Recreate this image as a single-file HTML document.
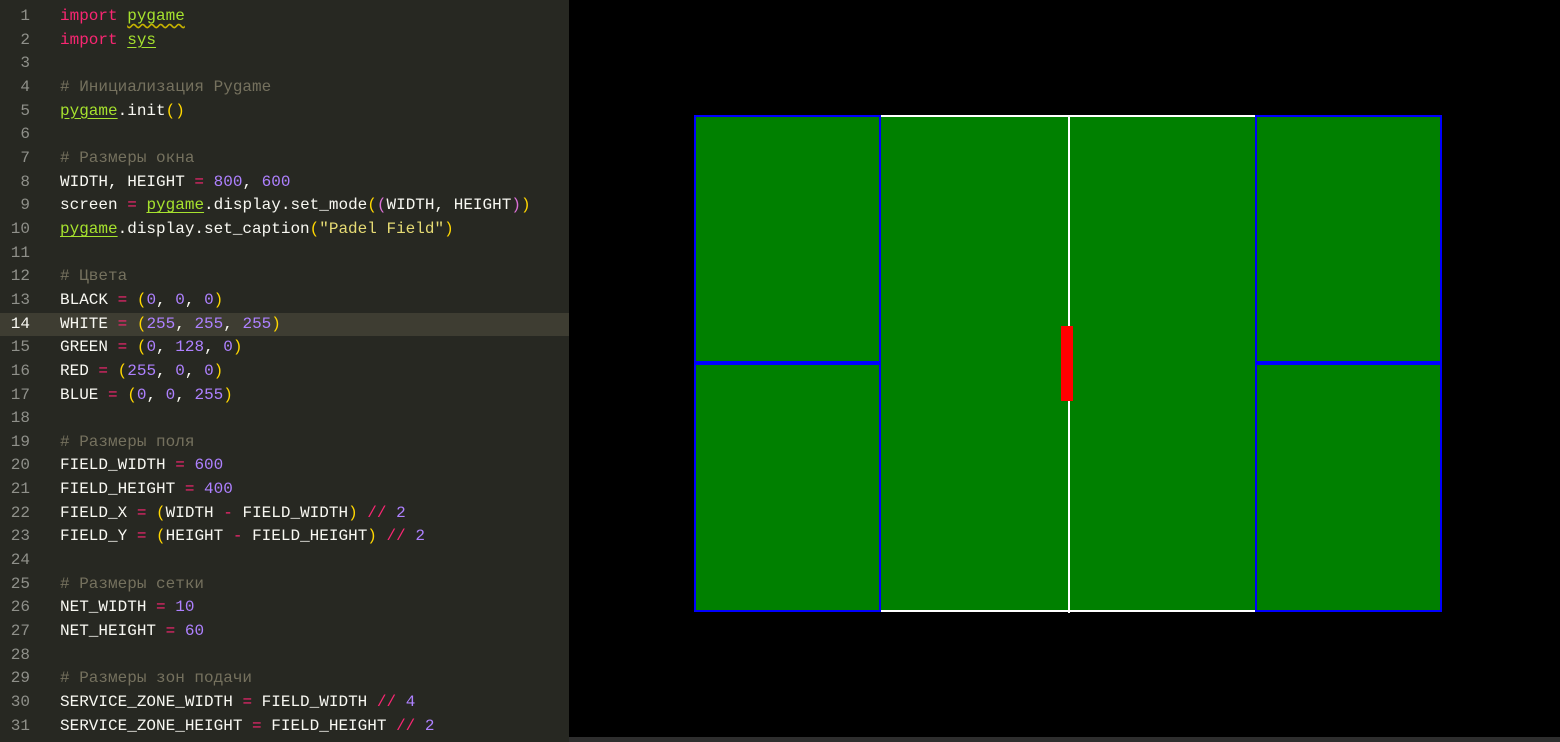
<!DOCTYPE html>
<html><head><meta charset="utf-8"><style>
body{margin:0;width:1560px;height:742px;background:#272822;overflow:hidden;position:relative;font-family:"Liberation Mono",monospace;font-size:16px}
.ed{position:absolute;left:0;top:5px;width:569px}
.l{height:23.67px;line-height:23.67px;white-space:pre;color:#f8f8f2;position:relative}
.n{position:absolute;left:0;width:30px;text-align:right;color:#8f908a}
.c{position:absolute;left:60px}
.hl{background:#3e3d32}
.k{color:#f92672}.g{color:#a6e22e;text-decoration:underline;text-decoration-color:#a6e22e;text-underline-offset:3px}.cm{color:#75715e}.p{color:#ae81ff}.s{color:#e6db74}.y{color:#ffd700}.m{color:#da70d6}
.w{text-decoration:underline wavy #c8b400}
.game{position:absolute;left:569px;top:0;width:991px;height:737px;background:#000}
.bot{position:absolute;left:569px;top:737px;width:991px;height:5px;background:#2e2e2e}
</style></head><body>
<div class="ed">
<div class="l"><span class="n">1</span><span class="c"><span class="k">import</span> <span class="g w">pygame</span></span></div>
<div class="l"><span class="n">2</span><span class="c"><span class="k">import</span> <span class="g">sys</span></span></div>
<div class="l"><span class="n">3</span></div>
<div class="l"><span class="n">4</span><span class="c cm"># Инициализация Pygame</span></div>
<div class="l"><span class="n">5</span><span class="c"><span class="g">pygame</span>.init<span class="y">()</span></span></div>
<div class="l"><span class="n">6</span></div>
<div class="l"><span class="n">7</span><span class="c cm"># Размеры окна</span></div>
<div class="l"><span class="n">8</span><span class="c">WIDTH, HEIGHT <span class="k">=</span> <span class="p">800</span>, <span class="p">600</span></span></div>
<div class="l"><span class="n">9</span><span class="c">screen <span class="k">=</span> <span class="g">pygame</span>.display.set_mode<span class="y">(</span><span class="m">(</span>WIDTH, HEIGHT<span class="m">)</span><span class="y">)</span></span></div>
<div class="l"><span class="n">10</span><span class="c"><span class="g">pygame</span>.display.set_caption<span class="y">(</span><span class="s">"Padel Field"</span><span class="y">)</span></span></div>
<div class="l"><span class="n">11</span></div>
<div class="l"><span class="n">12</span><span class="c cm"># Цвета</span></div>
<div class="l"><span class="n">13</span><span class="c">BLACK <span class="k">=</span> <span class="y">(</span><span class="p">0</span>, <span class="p">0</span>, <span class="p">0</span><span class="y">)</span></span></div>
<div class="l hl"><span class="n" style="color:#f8f8f2">14</span><span class="c">WHITE <span class="k">=</span> <span class="y">(</span><span class="p">255</span>, <span class="p">255</span>, <span class="p">255</span><span class="y">)</span></span></div>
<div class="l"><span class="n">15</span><span class="c">GREEN <span class="k">=</span> <span class="y">(</span><span class="p">0</span>, <span class="p">128</span>, <span class="p">0</span><span class="y">)</span></span></div>
<div class="l"><span class="n">16</span><span class="c">RED <span class="k">=</span> <span class="y">(</span><span class="p">255</span>, <span class="p">0</span>, <span class="p">0</span><span class="y">)</span></span></div>
<div class="l"><span class="n">17</span><span class="c">BLUE <span class="k">=</span> <span class="y">(</span><span class="p">0</span>, <span class="p">0</span>, <span class="p">255</span><span class="y">)</span></span></div>
<div class="l"><span class="n">18</span></div>
<div class="l"><span class="n">19</span><span class="c cm"># Размеры поля</span></div>
<div class="l"><span class="n">20</span><span class="c">FIELD_WIDTH <span class="k">=</span> <span class="p">600</span></span></div>
<div class="l"><span class="n">21</span><span class="c">FIELD_HEIGHT <span class="k">=</span> <span class="p">400</span></span></div>
<div class="l"><span class="n">22</span><span class="c">FIELD_X <span class="k">=</span> <span class="y">(</span>WIDTH <span class="k">-</span> FIELD_WIDTH<span class="y">)</span> <span class="k">//</span> <span class="p">2</span></span></div>
<div class="l"><span class="n">23</span><span class="c">FIELD_Y <span class="k">=</span> <span class="y">(</span>HEIGHT <span class="k">-</span> FIELD_HEIGHT<span class="y">)</span> <span class="k">//</span> <span class="p">2</span></span></div>
<div class="l"><span class="n">24</span></div>
<div class="l"><span class="n">25</span><span class="c cm"># Размеры сетки</span></div>
<div class="l"><span class="n">26</span><span class="c">NET_WIDTH <span class="k">=</span> <span class="p">10</span></span></div>
<div class="l"><span class="n">27</span><span class="c">NET_HEIGHT <span class="k">=</span> <span class="p">60</span></span></div>
<div class="l"><span class="n">28</span></div>
<div class="l"><span class="n">29</span><span class="c cm"># Размеры зон подачи</span></div>
<div class="l"><span class="n">30</span><span class="c">SERVICE_ZONE_WIDTH <span class="k">=</span> FIELD_WIDTH <span class="k">//</span> <span class="p">4</span></span></div>
<div class="l"><span class="n">31</span><span class="c">SERVICE_ZONE_HEIGHT <span class="k">=</span> FIELD_HEIGHT <span class="k">//</span> <span class="p">2</span></span></div>
</div>
<div class="game">
<svg width="991" height="737" style="position:absolute;left:0;top:0">
<rect x="125" y="115" width="747" height="497" fill="#008000"/>
<line x1="125" y1="116" x2="872" y2="116" stroke="#fff" stroke-width="2"/>
<line x1="125" y1="611" x2="872" y2="611" stroke="#fff" stroke-width="2"/>
<line x1="500" y1="115" x2="500" y2="613" stroke="#fff" stroke-width="2"/>
<rect x="126" y="116" width="185" height="495" fill="none" stroke="#0000ff" stroke-width="2"/>
<rect x="687" y="116" width="185" height="495" fill="none" stroke="#0000ff" stroke-width="2"/>
<rect x="125" y="361" width="187" height="4" fill="#0000ff"/>
<rect x="686" y="361" width="187" height="4" fill="#0000ff"/>
<rect x="492" y="326" width="12" height="75" fill="#ff0000"/>
</svg>
</div>
<div class="bot"></div>
</body></html>
